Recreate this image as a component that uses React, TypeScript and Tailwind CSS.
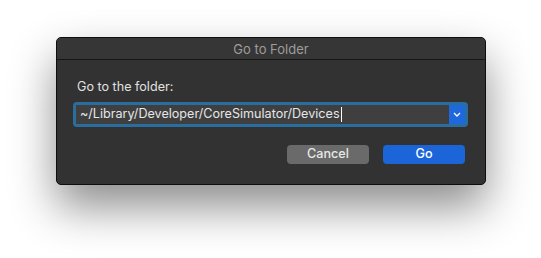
export default function App() {
  return (
    <div className="w-[541px] h-[258px] bg-white pt-[37px] pl-[56px]" style={{ fontFamily: 'Inter, "Liberation Sans", sans-serif' }}>
      <div className="w-[430px] h-[148px] rounded-[5px] bg-[#323232] border border-[#0e0e0e] shadow-[0_22px_45px_rgba(0,0,0,0.45)] flex flex-col overflow-hidden">
        <div className="h-[22px] flex items-center justify-center bg-[#363636] border-b border-[#161616] shrink-0 pt-[2px]">
          <span className="text-[13px] text-[#9d9d9d] leading-none">Go to Folder</span>
        </div>
        <div className="flex flex-col pl-[16px] pr-[17px] pt-[21px]">
          <div className="text-[12.6px] text-[#e0e0e0] leading-none pl-[4px]">Go to the folder:</div>
          <div className="mt-[8px] h-[25px] rounded-[4px] bg-[#2a6d9f] p-[3px] flex">
            <div className="flex-1 bg-[#3f3f3f] flex items-center pl-[4px]">
              <span className="text-[12.6px] text-[#e6e6e6] leading-none">~/Library/Developer/CoreSimulator/Devices</span>
              <span className="w-px h-[15px] bg-white ml-px" />
            </div>
            <div className="w-[16px] bg-[#1e68dc] flex items-center justify-center">
              <svg width="8" height="5" viewBox="0 0 8 5"><path d="M1 1 L4 4 L7 1" fill="none" stroke="white" strokeWidth="1.3" /></svg>
            </div>
          </div>
          <div className="flex justify-end gap-[14px] mt-[18px] pr-[3px]">
            <button className="w-[82px] h-[19px] rounded-[4px] bg-[#6a6a6a] text-[12.6px] text-[#e8e8e8] leading-none font-medium">Cancel</button>
            <button className="w-[82px] h-[19px] rounded-[4px] bg-[#1b65d8] text-[12.6px] text-white leading-none font-medium">Go</button>
          </div>
        </div>
      </div>
    </div>
  );
}
